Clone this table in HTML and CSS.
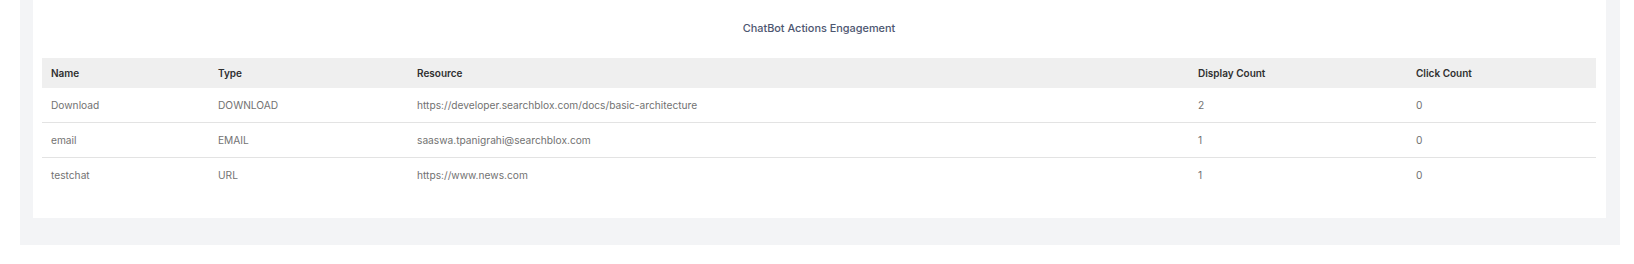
FILE: index.html
```html
<!DOCTYPE html>
<html>
<head>
<meta charset="utf-8">
<link rel="stylesheet" href="styles.css">
</head>
<body>
<div class="panel">
  <div class="card">
    <div class="title">ChatBot Actions Engagement</div>
    <table class="grid">
      <colgroup>
        <col class="c1"><col class="c2"><col class="c3"><col class="c4"><col class="c5">
      </colgroup>
      <thead>
        <tr><th>Name</th><th>Type</th><th>Resource</th><th>Display Count</th><th>Click Count</th></tr>
      </thead>
      <tbody>
        <tr><td>Download</td><td>DOWNLOAD</td><td>https://developer.searchblox.com/docs/basic-architecture</td><td>2</td><td>0</td></tr>
        <tr><td>email</td><td>EMAIL</td><td>saaswa.tpanigrahi@searchblox.com</td><td>1</td><td>0</td></tr>
        <tr><td>testchat</td><td>URL</td><td>https://www.news.com</td><td>1</td><td>0</td></tr>
      </tbody>
    </table>
  </div>
</div>
</body>
</html>
```
FILE: styles.css
```css
html, body {
  margin: 0;
  padding: 0;
  background: #ffffff;
  font-family: Inter, "Noto Sans", "Liberation Sans", sans-serif;
}
.panel {
  margin: 0 14px 0 20px;
  background: #f3f4f6;
  padding: 0 14px 27px 13px;
}
.card {
  background: #ffffff;
  padding: 0 10px 26px 9px;
}
.title {
  height: 58px;
  display: flex;
  align-items: center;
  justify-content: center;
  font-size: 10.9px;
  font-weight: 500;
  color: #4d5670;
  padding-bottom: 2px;
  box-sizing: border-box;
}
.grid {
  width: 100%;
  border-collapse: collapse;
  table-layout: fixed;
  font-size: 10.2px;
}
.c1 { width: 167px; }
.c2 { width: 199px; }
.c3 { width: 781px; }
.c4 { width: 218px; }
.c5 { width: auto; }
.grid th {
  background: #efefef;
  height: 30px;
  padding: 0 9px;
  text-align: left;
  font-size: 10px;
  font-weight: 600;
  color: #2f2f2f;
}
.grid td {
  height: 34px;
  padding: 0 9px;
  color: #727272;
  border-bottom: 1px solid #e3e3e3;
}
.grid tbody tr:last-child td {
  border-bottom: none;
}
```
